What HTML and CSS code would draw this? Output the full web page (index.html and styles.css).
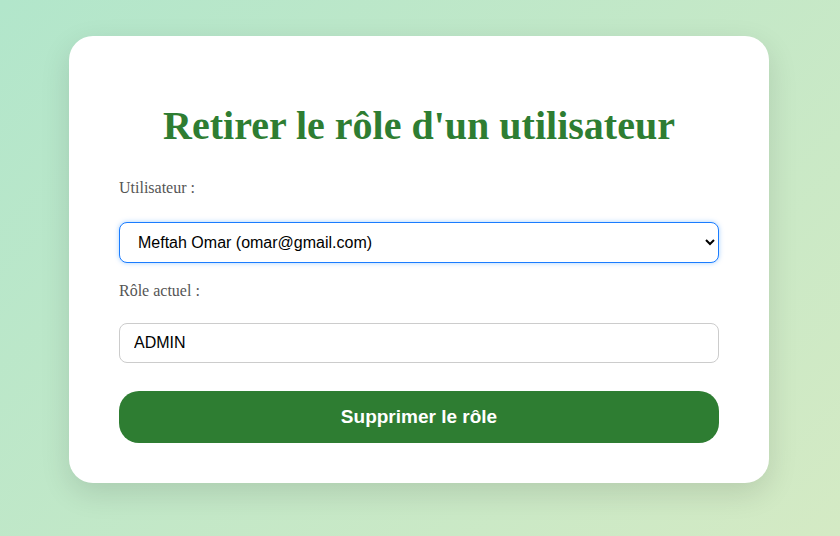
FILE: index.html
```html
<!DOCTYPE html>
<html lang="fr">
<head>
<meta charset="utf-8">
<title>Retirer le rôle</title>
<link rel="stylesheet" href="styles.css">
</head>
<body>
<main class="card">
  <h1 class="title">Retirer le rôle d'un utilisateur</h1>
  <form class="form">
    <label class="label" for="user">Utilisateur :</label>
    <select id="user" class="field select">
      <option>Meftah Omar (omar@gmail.com)</option>
    </select>
    <label class="label label-tight" for="role">Rôle actuel :</label>
    <input id="role" class="field input" type="text" value="ADMIN" readonly>
    <button type="button" class="btn">Supprimer le rôle</button>
  </form>
</main>
</body>
</html>
```
FILE: styles.css
```css
html, body {
  margin: 0;
  height: 100%;
}
body {
  background: linear-gradient(135deg, #b2e6cb, #d4eac4);
  font-family: "Liberation Serif", "Times New Roman", serif;
  display: flex;
  justify-content: center;
  align-items: flex-start;
  padding: 36px 2px 0 0;
  box-sizing: border-box;
}
.card {
  width: 700px;
  box-sizing: border-box;
  background: #fff;
  border-radius: 24px;
  padding: 40px 50px 40px;
  box-shadow: 0 10px 30px rgba(0, 0, 0, 0.12);
}
.title {
  margin: 27px 0 30px;
  text-align: center;
  font-size: 40px;
  font-weight: bold;
  color: #2e7d32;
  line-height: 46px;
}
.form {
  display: flex;
  flex-direction: column;
}
.label {
  font-size: 16px;
  color: #555;
  line-height: 18px;
  margin-bottom: 25px;
}
.label-tight {
  margin-bottom: 23px;
}
.field {
  height: 41px;
  box-sizing: border-box;
  border: 1px solid #ccc;
  border-radius: 8px;
  font-family: "Liberation Sans", Arial, sans-serif;
  font-size: 16px;
  color: #000;
  background: #fff;
  margin-bottom: 19px;
}
.select {
  padding: 0 10px 0 14px;
  border-color: #1a7cff;
  box-shadow: 0 0 5px rgba(0, 123, 255, 0.35);
  outline: none;
}
.input {
  height: 40px;
  padding: 0 14px;
  margin-bottom: 28px;
  outline: none;
}
.btn {
  height: 52px;
  border: none;
  border-radius: 20px;
  background: #2e7d32;
  color: #fff;
  font-family: "Liberation Sans", Arial, sans-serif;
  font-weight: bold;
  font-size: 19px;
  cursor: pointer;
}
```
